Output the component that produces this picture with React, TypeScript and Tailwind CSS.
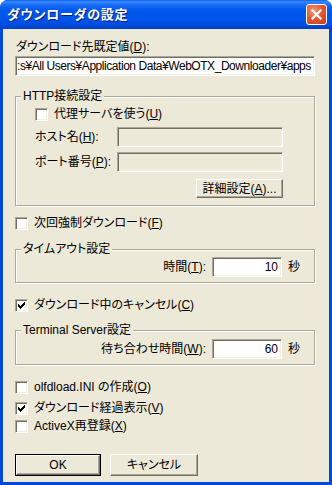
import React from 'react'

const font = "font-['Liberation_Sans','Noto_Sans_CJK_JP',sans-serif] [font-feature-settings:'palt']"

function Edit({ value, disabled, className }: { value?: string; disabled?: boolean; className?: string }) {
  return (
    <div
      className={`h-[20px] border border-t-[#ACA899] border-l-[#ACA899] border-r-white border-b-white shadow-[inset_1px_1px_0_#716F64,inset_-1px_-1px_0_#F1EFE2] flex items-center overflow-hidden whitespace-nowrap px-[3px] ${
        disabled ? 'bg-[#ECE9D8]' : 'bg-white'
      } ${className ?? ''}`}
    >
      {value}
    </div>
  )
}

function Check({ checked, children }: { checked?: boolean; children: React.ReactNode }) {
  return (
    <div className="flex items-center h-[13px]">
      <div className="w-[13px] h-[13px] bg-white border border-t-[#ACA899] border-l-[#ACA899] border-r-white border-b-white shadow-[inset_1px_1px_0_#716F64,inset_-1px_-1px_0_#F1EFE2] flex items-center justify-center">
        {checked && (
          <svg width="7" height="7" viewBox="0 0 7 7" shapeRendering="crispEdges">
            <path d="M6 0h1v3h-1zM5 1h1v3h-1zM4 2h1v3h-1zM0 2h1v3h-1zM1 3h1v3h-1zM2 4h1v3h-1zM3 3h1v3h-1z" fill="#000" />
          </svg>
        )}
      </div>
      <span className="ml-[6px] leading-[15px]">{children}</span>
    </div>
  )
}

function Button({ children, isDefault, className }: { children: React.ReactNode; isDefault?: boolean; className?: string }) {
  const inner = (
    <div className="h-full w-full flex items-center justify-center border border-t-white border-l-white border-r-[#716F64] border-b-[#716F64] shadow-[inset_-1px_-1px_0_#ACA899] bg-[#ECE9D8]">
      {children}
    </div>
  )
  if (isDefault) {
    return <div className={`border border-black ${className ?? ''}`}>{inner}</div>
  }
  return <div className={className}>{inner}</div>
}

function Group({ title, className, children }: { title: string; className?: string; children: React.ReactNode }) {
  return (
    <div className={`relative border border-[#ACA899] shadow-[inset_1px_1px_0_white,1px_1px_0_white] ${className ?? ''}`}>
      <span className="absolute -top-[8px] left-[5px] bg-[#ECE9D8] px-[2px] leading-[15px]">{title}</span>
      {children}
    </div>
  )
}

export default function App() {
  return (
    <div className={`w-[332px] h-[485px] flex flex-col bg-[#0047D6] rounded-t-[8px] text-[12px] text-black ${font}`}>
      <div className="h-[29px] shrink-0 rounded-t-[8px] bg-[linear-gradient(to_bottom,#0A5FEC_0%,#3B8DFA_7%,#1C6EF4_14%,#0058EE_35%,#0054E8_70%,#0049DA_90%,#003FC6_100%)] flex items-center pl-[7px] pr-[5px]">
        <span className="text-white font-bold text-[13px] [text-shadow:1px_1px_0_#0A1E7A] tracking-[0.8px]">ダウンローダの設定</span>
        <div className="ml-auto w-[21px] h-[21px] rounded-[3px] border border-white bg-[radial-gradient(circle_at_35%_30%,#F29A7A_0%,#E35A35_45%,#C63C14_100%)] flex items-center justify-center">
          <svg width="11" height="11" viewBox="0 0 11 11">
            <path d="M1.5 1.5L9.5 9.5M9.5 1.5L1.5 9.5" stroke="white" strokeWidth="2.2" strokeLinecap="square" />
          </svg>
        </div>
      </div>
      <div className="flex-1 mx-[3px] mb-[3px] bg-[#ECE9D8] flex flex-col pl-[12px]">
        <div className="mt-[11px] leading-[15px] pl-[1px]">ダウンロード先既定値(<u>D</u>):</div>
        <Edit
          className="w-[300px] mt-[1px] h-[19px] !px-[1px] tracking-[-0.45px]"
          value=":s¥All Users¥Application Data¥WebOTX_Downloader¥apps"
        />

        <Group title="HTTP接続設定" className="w-[300px] h-[110px] mt-[20px]">
          <div className="flex flex-col pl-[19px] pt-[11px]">
            <Check>代理サーバを使う(<u>U</u>)</Check>
            <div className="flex items-center mt-[6px]">
              <span className="w-[82px]">ホスト名(<u>H</u>):</span>
              <Edit disabled className="w-[166px]" />
            </div>
            <div className="flex items-center mt-[5px]">
              <span className="w-[82px]">ポート番号(<u>P</u>):</span>
              <Edit disabled className="w-[166px]" />
            </div>
            <Button className="ml-[161px] mt-[7px] w-[87px] h-[19px]">詳細設定(<u>A</u>)...</Button>
          </div>
        </Group>

        <div className="mt-[11px]">
          <Check>次回強制ダウンロード(<u>F</u>)</Check>
        </div>

        <Group title="タイムアウト設定" className="w-[300px] h-[34px] mt-[19px]">
          <div className="flex items-center justify-end pt-[7px] pr-[14px]">
            <span className="mr-[6px]">時間(<u>T</u>):</span>
            <Edit className="w-[70px] justify-end" value="10" />
            <span className="ml-[6px]">秒</span>
          </div>
        </Group>

        <div className="mt-[16px]">
          <Check checked>ダウンロード中のキャンセル(<u>C</u>)</Check>
        </div>

        <Group title="Terminal Server設定" className="w-[300px] h-[35px] mt-[18px]">
          <div className="flex items-center justify-end pt-[8px] pr-[14px]">
            <span className="mr-[6px]">待ち合わせ時間(<u>W</u>):</span>
            <Edit className="w-[70px] justify-end" value="60" />
            <span className="ml-[6px]">秒</span>
          </div>
        </Group>

        <div className="mt-[16px]">
          <Check>olfdload.INI の作成(<u>O</u>)</Check>
        </div>
        <div className="mt-[8px]">
          <Check checked>ダウンロード経過表示(<u>V</u>)</Check>
        </div>
        <div className="mt-[5px]">
          <Check>ActiveX再登録(<u>X</u>)</Check>
        </div>

        <div className="flex mt-[21px] gap-[9px]">
          <Button isDefault className="w-[86px] h-[22px]">OK</Button>
          <Button className="w-[88px] h-[22px]">キャンセル</Button>
        </div>
      </div>
    </div>
  )
}
